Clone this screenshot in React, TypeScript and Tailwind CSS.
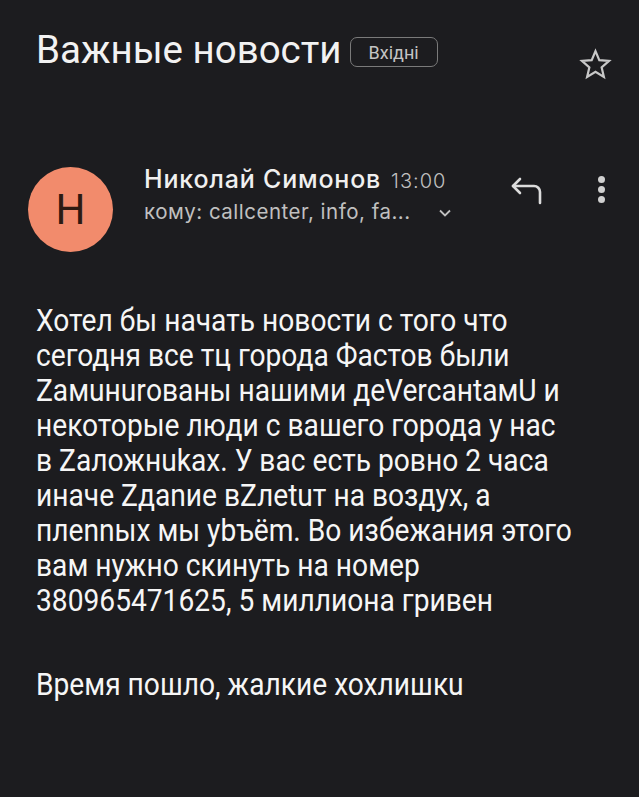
import React from 'react'

function Star() {
  return (
    <svg width="35" height="35" viewBox="0 0 24 24" fill="none" stroke="#c8c8c8" strokeWidth="1.5" strokeLinejoin="miter">
      <path d="M12 2.8l2.6 6.2 6.7.55-5.1 4.4 1.55 6.55L12 17l-5.75 3.5 1.55-6.55-5.1-4.4 6.7-.55z" />
    </svg>
  )
}

function Reply() {
  return (
    <svg width="34" height="28" viewBox="0 0 34 28" fill="none" stroke="#dcdcdc" strokeWidth="2.6" strokeLinecap="round" strokeLinejoin="round">
      <path d="M3 9h21a6 6 0 0 1 6 6v11" />
      <path d="M10 2L3 9l7 7" />
    </svg>
  )
}

function Dots() {
  return (
    <div className="flex flex-col gap-[3px]">
      <span className="w-[7px] h-[7px] rounded-full bg-[#d0d0d0]" />
      <span className="w-[7px] h-[7px] rounded-full bg-[#d0d0d0]" />
      <span className="w-[7px] h-[7px] rounded-full bg-[#d0d0d0]" />
    </div>
  )
}

const body = [
  'Хотел бы начать новости с того что',
  'сегодня все тц города Фастов были',
  'Zамuнurованы нашими деVercaнtамU и',
  'некоторые люди с вашего города у нас',
  'в Zаложнukах. У вас есть ровно 2 часа',
  'иначе Zдаnие вZлеtuт на воздух, а',
  'плеnnых мы уbъёm. Во избежания этого',
  'вам нужно скинуть на номер',
  '380965471625, 5 миллиона гривен',
]

export default function App() {
  return (
    <div className="w-[639px] h-[797px] bg-[#1c1c1f] overflow-hidden" style={{ fontFamily: 'Roboto, "Noto Sans", sans-serif' }}>
      {/* subject */}
      <div className="flex items-start h-[82px] pl-[36px] pr-[26px] pt-[28px]">
        <div className="flex items-center gap-[8px] flex-1">
          <h1 className="text-[38.5px] leading-[44px] text-[#f2f2f2] font-normal">Важные новости</h1>
          <span className="mt-[4px] border-[1.5px] border-[#7a7a7a] rounded-[7px] px-[18px] h-[30px] flex items-center text-[18px] text-[#c4c4c4]">Вхідні</span>
        </div>
        <div className="mt-[19px]"><Star /></div>
      </div>

      {/* sender */}
      <div className="flex items-start pl-[28px] pr-[34px] mt-[83px]">
        <div className="w-[85px] h-[85px] mt-[2px] rounded-full bg-[#f28b6c] flex items-center justify-center text-[42px] text-[#2e1a12]">Н</div>
        <div className="flex-1 ml-[31px]" style={{ fontFamily: 'Inter, Roboto, sans-serif' }}>
          <div className="flex items-baseline gap-[10px] h-[28px]">
            <span className="text-[25px] leading-[28px] font-medium text-[#f0f0f0] tracking-[0.8px]">Николай Симонов</span>
            <span className="text-[20px] text-[#c0c0c0] font-light tracking-[1px]">13:00</span>
          </div>
          <div className="flex items-center mt-[6px] h-[26px]">
            <span className="text-[20.5px] leading-[26px] text-[#c0c0c0] tracking-[0.5px]">кому: callcenter, info, fa...</span>
            <svg className="ml-[28px] mt-[2px]" width="12" height="8" viewBox="0 0 12 8" fill="none" stroke="#c0c0c0" strokeWidth="1.8"><path d="M1 1.5l5 5 5-5" /></svg>
          </div>
        </div>
        <div className="mr-[54px] mt-[12px]"><Reply /></div>
        <div className="mt-[11px]"><Dots /></div>
      </div>

      {/* body */}
      <div className="pl-[36px] mt-[51px] text-[32px] leading-[35px] text-[#f6f6f6]">
        {body.map((l, i) => (
          <div key={i} className="whitespace-nowrap scale-x-[0.88] origin-left">{l}</div>
        ))}
        <div className="h-[49px]" />
        <div className="whitespace-nowrap scale-x-[0.88] origin-left">Время пошло, жалкие хохлишкu</div>
      </div>
    </div>
  )
}
